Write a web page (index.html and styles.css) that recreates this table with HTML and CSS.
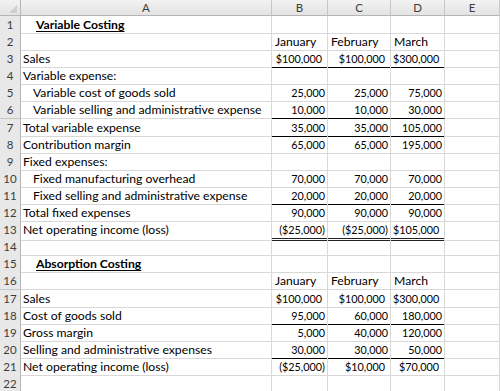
FILE: index.html
```html
<!DOCTYPE html>
<html>
<head>
<meta charset="utf-8">
<link rel="stylesheet" href="styles.css">
</head>
<body>
<div class="sheet">
  <div class="row hdr">
    <div class="corner"><svg width="20" height="15" viewBox="0 0 20 15"><polygon points="17,5 17,13 9,13" fill="#cfcfcf"/></svg></div>
    <div class="ch">A</div><div class="ch">B</div><div class="ch">C</div><div class="ch">D</div><div class="ch">E</div>
  </div>

  <div class="row"><div class="rh">1</div><div class="cell a title">Variable Costing</div><div class="cell"></div><div class="cell"></div><div class="cell"></div><div class="cell"></div></div>
  <div class="row"><div class="rh">2</div><div class="cell a"></div><div class="cell m">January</div><div class="cell m">February</div><div class="cell m">March</div><div class="cell"></div></div>
  <div class="row"><div class="rh">3</div><div class="cell a">Sales</div><div class="cell n ub">$100,000<span class="p">)</span></div><div class="cell n ub">$100,000<span class="p">)</span></div><div class="cell n ub">$300,000<span class="p">)</span></div><div class="cell"></div></div>
  <div class="row"><div class="rh">4</div><div class="cell a">Variable expense:</div><div class="cell"></div><div class="cell"></div><div class="cell"></div><div class="cell"></div></div>
  <div class="row"><div class="rh">5</div><div class="cell a ind">Variable cost of goods sold</div><div class="cell n">25,000</div><div class="cell n">25,000</div><div class="cell n">75,000</div><div class="cell"></div></div>
  <div class="row"><div class="rh">6</div><div class="cell a ind">Variable selling and administrative expense</div><div class="cell n ub">10,000</div><div class="cell n ub">10,000</div><div class="cell n ub">30,000</div><div class="cell"></div></div>
  <div class="row"><div class="rh">7</div><div class="cell a">Total variable expense</div><div class="cell n ub">35,000</div><div class="cell n ub">35,000</div><div class="cell n ub">105,000</div><div class="cell"></div></div>
  <div class="row"><div class="rh">8</div><div class="cell a">Contribution margin</div><div class="cell n">65,000</div><div class="cell n">65,000</div><div class="cell n">195,000</div><div class="cell"></div></div>
  <div class="row"><div class="rh">9</div><div class="cell a">Fixed expenses:</div><div class="cell"></div><div class="cell"></div><div class="cell"></div><div class="cell"></div></div>
  <div class="row"><div class="rh">10</div><div class="cell a ind">Fixed manufacturing overhead</div><div class="cell n">70,000</div><div class="cell n">70,000</div><div class="cell n">70,000</div><div class="cell"></div></div>
  <div class="row"><div class="rh">11</div><div class="cell a ind">Fixed selling and administrative expense</div><div class="cell n ub">20,000</div><div class="cell n ub">20,000</div><div class="cell n ub">20,000</div><div class="cell"></div></div>
  <div class="row"><div class="rh">12</div><div class="cell a">Total fixed expenses</div><div class="cell n">90,000</div><div class="cell n">90,000</div><div class="cell n">90,000</div><div class="cell"></div></div>
  <div class="row"><div class="rh">13</div><div class="cell a">Net operating income (loss)</div><div class="cell n dbl">($25,000)</div><div class="cell n dbl">($25,000)</div><div class="cell n dbl">$105,000<span class="p">)</span></div><div class="cell"></div></div>
  <div class="row"><div class="rh">14</div><div class="cell a"></div><div class="cell"></div><div class="cell"></div><div class="cell"></div><div class="cell"></div></div>
  <div class="row"><div class="rh">15</div><div class="cell a title">Absorption Costing</div><div class="cell"></div><div class="cell"></div><div class="cell"></div><div class="cell"></div></div>
  <div class="row"><div class="rh">16</div><div class="cell a"></div><div class="cell m">January</div><div class="cell m">February</div><div class="cell m">March</div><div class="cell"></div></div>
  <div class="row"><div class="rh">17</div><div class="cell a">Sales</div><div class="cell n">$100,000<span class="p">)</span></div><div class="cell n">$100,000<span class="p">)</span></div><div class="cell n">$300,000<span class="p">)</span></div><div class="cell"></div></div>
  <div class="row"><div class="rh">18</div><div class="cell a">Cost of goods sold</div><div class="cell n ub">95,000</div><div class="cell n ub">60,000</div><div class="cell n ub">180,000</div><div class="cell"></div></div>
  <div class="row"><div class="rh">19</div><div class="cell a">Gross margin</div><div class="cell n">5,000</div><div class="cell n">40,000</div><div class="cell n">120,000</div><div class="cell"></div></div>
  <div class="row"><div class="rh">20</div><div class="cell a">Selling and administrative expenses</div><div class="cell n ub">30,000</div><div class="cell n ub">30,000</div><div class="cell n ub">50,000</div><div class="cell"></div></div>
  <div class="row"><div class="rh">21</div><div class="cell a">Net operating income (loss)</div><div class="cell n">($25,000)</div><div class="cell n">$10,000<span class="p">)</span></div><div class="cell n">$70,000<span class="p">)</span></div><div class="cell"></div></div>
  <div class="row"><div class="rh">22</div><div class="cell a"></div><div class="cell"></div><div class="cell"></div><div class="cell"></div><div class="cell"></div></div>
</div>
</body>
</html>
```

FILE: styles.css
```css
html, body {
  margin: 0;
  padding: 0;
  background: #ffffff;
  overflow: hidden;
}
body {
  font-family: Lato, "Open Sans", sans-serif;
  font-size: 12.2px;
  color: #000;
}
.sheet {
  width: 500px;
}
.row {
  display: grid;
  grid-template-columns: 21px 251px 56px 63px 54px 1fr;
  height: 17.1px;
}
.row.hdr {
  height: 16px;
}
.corner, .ch, .rh {
  box-sizing: border-box;
  background: linear-gradient(#f2f2f2, #e3e3e3);
  color: #3c3c3c;
  text-align: center;
}
.corner {
  border-right: 1px solid #b5b5b5;
  border-bottom: 1px solid #b5b5b5;
}
.corner svg {
  display: block;
}
.ch {
  border-right: 1px solid #c6c6c6;
  border-bottom: 1px solid #b5b5b5;
  line-height: 15px;
  font-size: 11.5px;
}
.rh {
  background: #e8e8e8;
  border-right: 1px solid #b5b5b5;
  border-bottom: 1px solid #c6c6c6;
  line-height: 16px;
  padding-top: 1px;
  font-size: 11.5px;
}
.cell {
  box-sizing: border-box;
  border-right: 1px solid #d8d8d8;
  border-bottom: 1px solid #d8d8d8;
  white-space: nowrap;
  overflow: hidden;
  line-height: 16px;
  padding: 1px 2px 0 2px;
}
.a {
  padding-left: 2px;
}
.ind {
  padding-left: 12px;
}
.title {
  padding-left: 15px;
  font-weight: 700;
  text-decoration: underline;
  text-underline-offset: 2px;
}
.m {
  padding-left: 3px;
}
.n {
  text-align: right;
  padding-right: 2px;
  font-size: 10.8px;
}
.p {
  visibility: hidden;
}
.ub {
  border-bottom-color: #000;
}
.dbl {
  border-bottom: 3px double #222;
  overflow: visible;
}
```
